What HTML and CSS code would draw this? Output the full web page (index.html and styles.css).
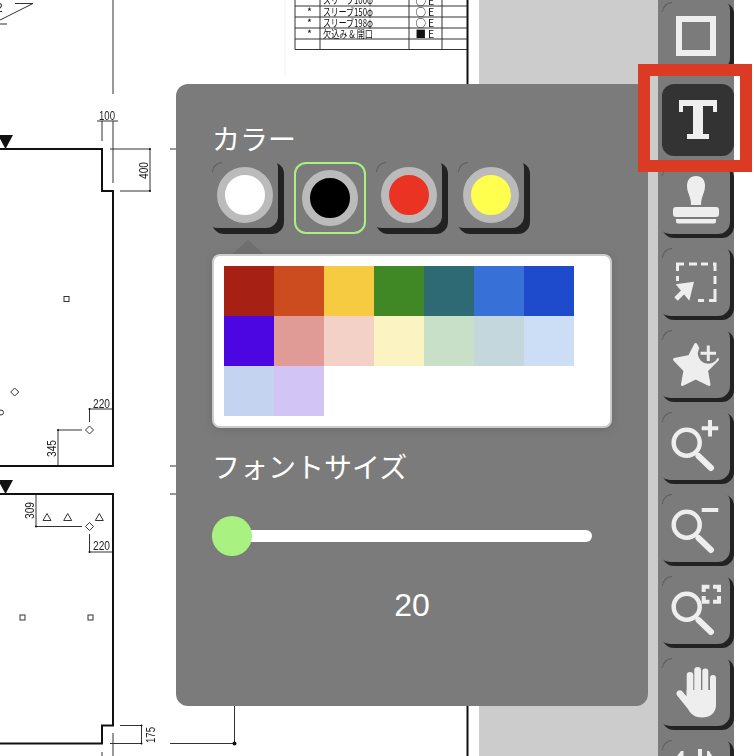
FILE: index.html
```html
<!DOCTYPE html>
<html lang="ja">
<head>
<meta charset="utf-8">
<title>図面エディタ</title>
<link rel="stylesheet" href="styles.css">
</head>
<body>
<div class="app">
  <main class="stage">
    <div class="sheet">
      <svg class="drawing" width="479" height="756" viewBox="0 0 479 756">
        <g class="thin">
          <path d="M15 3.500H33L0 20M0 24H7"/>
          <path d="M113 0V94M97 121H118M102 121V141M113 121V183"/>
          <path d="M110 149H150V191H120M170 149H176M170 466H176M170 494H176"/>
          <path d="M89.500 422V409H113M82 430H58V466"/>
          <path d="M36 494V526.500H82M89.500 534V552H113"/>
          <path d="M120 725.500H141.500V743.500H110M113 733V756M102 752V756M170 743.500H235M234.500 706V743.500"/>
          <circle cx="1" cy="412.500" r="2.500"/>
        </g>
        <g class="outline">
          <path d="M0 149H102V191H113V466H0"/>
          <path d="M0 494H113V725.500H102V743.500H0"/>
          <path d="M467.500 0V84M467.500 706V756"/>
        </g>
        <g class="solid">
          <path d="M-2 135H13L5.500 149Z"/>
          <path d="M-2 480H13L5.500 494Z"/>
          <circle cx="234.500" cy="743.500" r="2"/>
          <circle cx="150" cy="149" r="1"/><circle cx="150" cy="191" r="1"/>
          <circle cx="141.500" cy="725.500" r="1"/><circle cx="141.500" cy="743.500" r="1"/>
          <circle cx="58" cy="430" r="1"/><circle cx="58" cy="466" r="1"/>
          <circle cx="89.500" cy="409" r="1"/><circle cx="89.500" cy="552" r="1"/>
          <circle cx="36" cy="526.500" r="1"/><circle cx="36" cy="494" r="1"/>
        </g>
        <g class="marks">
          <rect x="64" y="296.500" width="5" height="5"/>
          <rect x="20" y="615" width="5" height="5"/>
          <rect x="88" y="615" width="5" height="5"/>
          <path d="M14.700 388L18.700 392L14.700 396L10.700 392Z"/>
          <path d="M89.500 426L93.500 430L89.500 434L85.500 430Z"/>
          <path d="M89.500 522.500L93.500 526.500L89.500 530.500L85.500 526.500Z"/>
          <path d="M47 513.500L51 520.500H43Z"/>
          <path d="M67.700 513.500L71.700 520.500H63.700Z"/>
          <path d="M99.300 513.500L103.300 520.500H95.300Z"/>
        </g>
        <g class="dim">
          <text x="-4" y="12">2</text>
          <text x="99" y="120" textLength="16" lengthAdjust="spacingAndGlyphs">100</text>
          <text x="93" y="407.500" textLength="17" lengthAdjust="spacingAndGlyphs">220</text>
          <text x="93" y="549.500" textLength="17" lengthAdjust="spacingAndGlyphs">220</text>
          <text transform="translate(148 179) rotate(-90)" textLength="17" lengthAdjust="spacingAndGlyphs">400</text>
          <text transform="translate(56 457) rotate(-90)" textLength="17" lengthAdjust="spacingAndGlyphs">345</text>
          <text transform="translate(34 519) rotate(-90)" textLength="17" lengthAdjust="spacingAndGlyphs">309</text>
          <text transform="translate(155 743) rotate(-90)" textLength="16" lengthAdjust="spacingAndGlyphs">175</text>
        </g>
        <g class="table-grid">
          <path class="faint" d="M285 0V75"/>
          <path d="M295 0V49.500H467M320 0V49.500M409 0V49.500M442 0V49.500M295 6H467M295 17H467M295 28H467M295 39H467"/>
        </g>
        <g class="table-text">
          <text x="307" y="5">*</text><text x="323" y="4" textLength="50" lengthAdjust="spacingAndGlyphs">スリーブ100φ</text><text x="415.500" y="4.500">○</text><text x="428" y="5">E</text>
          <text x="307" y="16">*</text><text x="323" y="15.500" textLength="50" lengthAdjust="spacingAndGlyphs">スリーブ150φ</text><text x="415.500" y="15.500">○</text><text x="428" y="16">E</text>
          <text x="307" y="27">*</text><text x="323" y="26.500" textLength="50" lengthAdjust="spacingAndGlyphs">スリーブ198φ</text><text x="415.500" y="26.500">○</text><text x="428" y="27">E</text>
          <text x="307" y="38">*</text><text x="323" y="37.500" textLength="50" lengthAdjust="spacingAndGlyphs">欠込み &amp; 開口</text><text x="415.500" y="37.500">■</text><text x="428" y="38">E</text>
        </g>
      </svg>
    </div>

    <section class="panel">
      <h2 class="panel-title">カラー</h2>
      <div class="swatches">
        <button class="swatch"><span class="dot dot-white"></span></button>
        <button class="swatch swatch-selected"><span class="dot dot-black"></span></button>
        <button class="swatch"><span class="dot dot-red"></span></button>
        <button class="swatch"><span class="dot dot-yellow"></span></button>
      </div>
      <div class="palette">
        <span class="palette-arrow"></span>
        <div class="palette-grid">
          <i class="c1"></i><i class="c2"></i><i class="c3"></i><i class="c4"></i><i class="c5"></i><i class="c6"></i><i class="c7"></i>
          <i class="c8"></i><i class="c9"></i><i class="c10"></i><i class="c11"></i><i class="c12"></i><i class="c13"></i><i class="c14"></i>
          <i class="c15"></i><i class="c16"></i>
        </div>
      </div>
      <h2 class="panel-title size-title">フォントサイズ</h2>
      <div class="slider"><div class="track"></div><div class="thumb"></div></div>
      <div class="value">20</div>
    </section>
  </main>

  <nav class="toolbar">
    <button class="tool">
      <svg class="icon" viewBox="0 0 72 72"><rect class="ln" x="17" y="17" width="34" height="34" stroke-width="6"/></svg>
    </button>
    <button class="tool tool-active">
      <svg class="icon" viewBox="0 0 72 72"><path class="fl" d="M17 16H55V28H51V22H41V50H47V55H25V50H31V22H21V28H17Z"/></svg>
    </button>
    <button class="tool">
      <svg class="icon" viewBox="0 0 72 72">
        <path class="fl" d="M34 10C28 10 25 14 25 20C25 27 29 30 29 39H39C39 30 43 27 43 20C43 14 40 10 34 10Z"/>
        <rect class="fl" x="11" y="41" width="46" height="10" rx="3"/>
        <path class="fl" d="M14 53H54V55Q54 57.500 52 57.500H16Q14 57.500 14 55Z"/>
      </svg>
    </button>
    <button class="tool">
      <svg class="icon" viewBox="0 0 72 72">
        <path class="ln" stroke-width="3" d="M22 16H15.500V23M15.500 28V33M27 16H35M39 16H46M51 16H53V23M53 28V36M53 41V52.500H47M42 52.500H36"/>
        <path class="fl" d="M13.700 36.300L32 33.700L27.300 52.700Z"/>
        <path class="ln" stroke-width="5" d="M14 51L23 42"/>
      </svg>
    </button>
    <button class="tool">
      <svg class="icon" viewBox="0 0 72 72">
        <path class="fl star" d="M33.700 14.500L40 26.500L55.500 29.500L44.500 40.500L47 54.500L33.700 48L20.500 54.500L23 40.500L12.500 29.500L27.500 26.500Z"/>
        <circle class="cut" cx="46.300" cy="23.300" r="10.500"/>
        <path class="ln" stroke-width="3" d="M46.300 15.500V31M38.500 23.300H54"/>
      </svg>
    </button>
    <button class="tool">
      <svg class="icon" viewBox="0 0 72 72">
        <circle class="ln" cx="24.700" cy="30.700" r="13" stroke-width="4.500"/>
        <path class="ln round" stroke-width="6" d="M36.500 44L49 56"/>
        <path class="ln" stroke-width="4" d="M48 8V24.500M39.700 16.300H56.300"/>
      </svg>
    </button>
    <button class="tool">
      <svg class="icon" viewBox="0 0 72 72">
        <circle class="ln" cx="24.700" cy="30.700" r="13" stroke-width="4.500"/>
        <path class="ln round" stroke-width="6" d="M36.500 44L49 56"/>
        <path class="ln" stroke-width="4" d="M39.700 16H56.300"/>
      </svg>
    </button>
    <button class="tool">
      <svg class="icon" viewBox="0 0 72 72">
        <circle class="ln" cx="24.700" cy="30.700" r="13" stroke-width="4.500"/>
        <path class="ln round" stroke-width="6" d="M36.500 44L49 56"/>
        <path class="ln" stroke-width="4" d="M41.700 16V10.700H47.500M51 10.700H57V16M57 20V25.700H51M47.500 25.700H41.700V20"/>
      </svg>
    </button>
    <button class="tool">
      <svg class="icon" viewBox="0 0 72 72">
        <rect class="fl" x="24.700" y="14" width="6.600" height="30" rx="3.300"/>
        <rect class="fl" x="32.300" y="9" width="6.700" height="30" rx="3.300"/>
        <rect class="fl" x="40.300" y="10.500" width="6" height="30" rx="3"/>
        <rect class="fl" x="48" y="17" width="6" height="26" rx="3"/>
        <path class="fl" d="M24.700 32H54V47C54 55 48 59.500 40 59.500C33 59.500 29 56.500 26 51L15.500 38C12.500 34 17 30.500 20 33L24.700 38.500Z"/>
      </svg>
    </button>
    <button class="tool">
      <svg class="icon" viewBox="0 0 72 72">
        <path class="fl" d="M19 11H21.500V25H8Z"/>
        <rect class="fl" x="36" y="9" width="4" height="16"/>
        <path class="fl" d="M45 11H47L56 25H45Z"/>
      </svg>
    </button>
  </nav>

  <div class="tool-highlight"></div>
</div>
</body>
</html>
```

FILE: styles.css
```css
* { box-sizing: border-box; }
html, body { margin: 0; padding: 0; background: #fff; }
.app {
  position: relative;
  display: flex;
  width: 754px;
  height: 756px;
  overflow: hidden;
  background: #fff;
}
.stage {
  position: relative;
  width: 658px;
  height: 756px;
  background: #cccccc;
}
.sheet { width: 479px; height: 756px; background: #fff; }
.drawing { display: block; filter: blur(0.35px); }
.thin path, .thin circle { fill: none; stroke: #333; stroke-width: 1; }
.outline path { fill: none; stroke: #111; stroke-width: 2; }
.solid { fill: #111; }
.marks { fill: none; stroke: #333; stroke-width: 1; }
.dim text {
  font-family: "Liberation Sans", sans-serif;
  font-size: 12px;
  fill: #222;
}
.table-grid path { fill: none; stroke: #333; stroke-width: 1; }
.table-grid path.faint { stroke: #f2f2f2; }
.table-text text {
  font-family: "Noto Sans CJK JP", sans-serif;
  font-size: 10.500px;
  fill: #111;
}

.panel {
  position: absolute;
  left: 176px;
  top: 84px;
  width: 472px;
  height: 622px;
  padding: 40px 36px 0;
  background: #7b7b7b;
  border-radius: 12px;
  color: #fff;
}
.panel-title {
  margin: 0;
  height: 28px;
  font-family: "Noto Sans CJK JP", sans-serif;
  font-size: 28px;
  font-weight: 400;
  line-height: 28px;
  color: #fff;
}
.size-title { margin-top: 24px; }
.swatches { display: flex; gap: 10px; margin-top: 10px; }
.swatch {
  position: relative;
  display: flex;
  align-items: center;
  justify-content: center;
  width: 72px;
  height: 72px;
  padding: 0 6px 6px 0;
  border: 0;
  border-radius: 12px;
  background: #7b7b7b;
  box-shadow: inset -6px -6px 0 #222;
}
.swatch::before,
.tool::before {
  content: "";
  position: absolute;
  left: 0;
  top: 0;
  width: 9px;
  height: 9px;
  border-top: 1px solid #5c5c5c;
  border-left: 1px solid #5c5c5c;
  border-top-left-radius: 12px;
}
.swatch-selected {
  padding: 0;
  border: 2px solid #a9f281;
  box-shadow: none;
}
.swatch-selected::before { display: none; }
.dot {
  display: block;
  width: 56px;
  height: 56px;
  border: 8px solid #bbbbbb;
  border-radius: 50%;
}
.dot-white { background: #fff; }
.dot-black { background: #000; }
.dot-red { background: #ea3323; }
.dot-yellow { background: #ffff4d; }

.palette {
  position: relative;
  width: 400px;
  height: 174px;
  margin-top: 20px;
  padding: 10px;
  background: #fff;
  border: 2px solid #cccccc;
  border-radius: 8px;
  box-shadow: 0 2px 10px rgba(0, 0, 0, 0.12);
}
.palette-arrow {
  position: absolute;
  left: 18px;
  top: -16px;
  width: 0;
  height: 0;
  border-left: 16px solid transparent;
  border-right: 16px solid transparent;
  border-bottom: 14px solid #6f6f6f;
}
.palette-grid { display: grid; grid-template-columns: repeat(7, 50px); grid-auto-rows: 50px; }
.palette-grid i { display: block; }
.c1 { background: #a62113; }
.c2 { background: #cc4b1f; }
.c3 { background: #f6cb42; }
.c4 { background: #3f8825; }
.c5 { background: #2d6a73; }
.c6 { background: #3771d8; }
.c7 { background: #1e4bcb; }
.c8 { background: #4b06e2; }
.c9 { background: #e09b97; }
.c10 { background: #f4d1c6; }
.c11 { background: #fcf3c3; }
.c12 { background: #c9e0c8; }
.c13 { background: #c4d7dc; }
.c14 { background: #cbdef5; }
.c15 { background: #c4d3f0; }
.c16 { background: #d2c5f6; }

.slider {
  position: relative;
  display: flex;
  align-items: center;
  width: 380px;
  height: 40px;
  margin-top: 36px;
}
.track { width: 100%; height: 12px; border-radius: 6px; background: #fff; }
.thumb {
  position: absolute;
  left: 0;
  top: 0;
  width: 40px;
  height: 40px;
  border-radius: 50%;
  background: #a9f281;
}
.value {
  height: 40px;
  margin-top: 29px;
  font-family: "Liberation Sans", sans-serif;
  font-size: 32px;
  line-height: 40px;
  text-align: center;
  color: #fff;
}

.toolbar {
  display: flex;
  flex-direction: column;
  flex: none;
  gap: 10px;
  width: 76px;
  height: 756px;
  padding: 2px 0 0 4px;
  overflow: hidden;
  background: #7b7b7b;
}
.tool {
  position: relative;
  flex: none;
  display: block;
  width: 72px;
  height: 72px;
  padding: 0;
  border: 0;
  border-radius: 12px;
  background: #7b7b7b;
  box-shadow: inset -4px -4px 0 #222;
}
.tool-active { background: #333333; box-shadow: none; }
.tool-active::before { display: none; }
.icon { display: block; width: 72px; height: 72px; }
.icon .ln { fill: none; stroke: #eeeeee; }
.icon .round { stroke-linecap: round; }
.icon .fl { fill: #eeeeee; }
.icon .star { stroke: #eeeeee; stroke-width: 3; stroke-linejoin: round; }
.icon .cut { fill: #7b7b7b; }

.tool-highlight {
  position: absolute;
  left: 638px;
  top: 64px;
  width: 114px;
  height: 108px;
  border: 12px solid #db3a25;
}
```
